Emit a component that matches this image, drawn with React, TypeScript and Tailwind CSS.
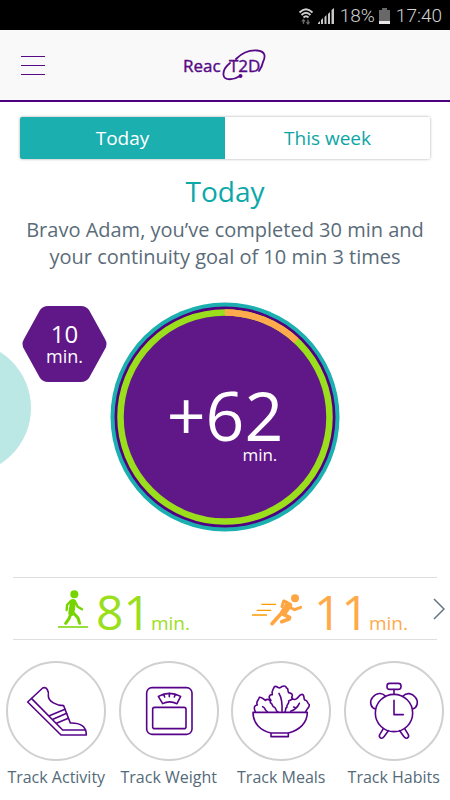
import { useState, type ReactNode } from "react";

const ARC = 2 * Math.PI * 104.5;

function StatusBar() {
  return (
    <div className="flex h-[30px] items-center justify-end bg-black pt-0.5 pr-2 font-[Roboto,sans-serif] text-[19px] text-[#d0d0d0]">
      <svg className="mr-0.5 h-5 w-5" viewBox="0 0 20 20" fill="none" stroke="#d0d0d0" strokeWidth="1.8" aria-hidden="true">
        <path d="M3.500 6.500Q10 0 16.500 6.500M5.500 9Q10 4.500 14.500 9M7.500 11.500Q10 9 12.500 11.500" />
        <path d="M7.500 18V14M6 15.500 7.500 13.500 9 15.500M12 13.500V17.500M10.500 16 12 18 13.500 16" stroke="#666" strokeWidth="1.300" />
      </svg>
      <svg className="mr-1.5 h-4 w-4" viewBox="0 0 16 16" fill="#c8c8c8" aria-hidden="true">
        <path d="M0 16v-1l2-2v3zM3 16v-4l2-2v6zM6.500 16V9l2-2v9zM10 16V6l2-2v12zM13.500 16V2L16 0v16z" />
      </svg>
      <span className="font-light">18%</span>
      <svg className="mr-1.5 ml-1 h-4 w-[11px]" viewBox="0 0 11 16" aria-hidden="true">
        <path d="M0 2h3V0h5v2h3v14H0z" fill="#686868" />
        <path d="M0 13h11v3H0z" fill="#e8e8e8" />
      </svg>
      <span className="font-light">17:40</span>
    </div>
  );
}

function Logo() {
  return (
    <svg className="h-10 w-[90px]" viewBox="0 0 90 40" role="img" aria-label="ReacT2D">
      <g fill="#560a86" stroke="#560a86" strokeWidth="0.4" fontFamily="'Open Sans', sans-serif" fontSize="18">
        <text x="3" y="27" fontSize="17">Reac</text>
        <text x="49" y="27" fontSize="17">T2D</text>
      </g>
      <path d="M56 14C62 8 70 5 77 5.500C85 6 86 11 83 17Q82 22 79 26M50 18C45 22 43 26 43.500 30C44 36 54 35 60 31" fill="none" stroke="#560a86" strokeWidth="1.8" strokeLinecap="round" />
      <circle cx="60.500" cy="31" r="2" fill="#560a86" />
    </svg>
  );
}

function Header() {
  return (
    <header className="grid h-[72px] grid-cols-[1fr_auto_1fr] items-center border-b-2 border-[#4d007f] bg-[#f9f9f9]">
      <button aria-label="Menu" className="ml-[21px] flex w-6 flex-col gap-2">
        <span className="h-px bg-[#560a86]" />
        <span className="h-px bg-[#560a86]" />
        <span className="h-px bg-[#560a86]" />
      </button>
      <Logo />
    </header>
  );
}

function Tabs() {
  const [active, setActive] = useState("Today");
  return (
    <div className="mx-5 mt-[15px] grid h-[42px] grid-cols-2 overflow-hidden rounded-xs shadow-[0_0_3px_#a8a8a8]">
      {["Today", "This week"].map((t) => (
        <button
          key={t}
          onClick={() => setActive(t)}
          className={t === active ? "bg-[#1bafb0] text-[19px] text-white" : "bg-white text-[19px] text-[#0ba5a5]"}
        >
          {t}
        </button>
      ))}
    </div>
  );
}

function Dial() {
  return (
    <div className="grid aspect-square w-[230px] place-items-center">
      <svg className="col-start-1 row-start-1 h-full w-full" viewBox="0 0 230 230" aria-hidden="true">
        <circle cx="115" cy="115" r="114.500" fill="#1bafb0" />
        <circle cx="115" cy="115" r="110.500" fill="#520082" />
        <circle cx="115" cy="115" r="102" fill="#601787" />
        <g fill="none" strokeWidth="6.500" transform="rotate(-90 115 115)">
          <circle cx="115" cy="115" r="104.500" stroke="#9ade1c" />
          <circle cx="115" cy="115" r="104.500" stroke="#ffaa4d" strokeDasharray={`${(ARC * 11) / 92} ${ARC}`} />
        </g>
      </svg>
      <div className="z-10 col-start-1 row-start-1 flex flex-col items-end pt-3 text-white">
        <span className="text-[68px] leading-[64px]">+62</span>
        <span className="pr-1.5 text-[17px] leading-4">min.</span>
      </div>
    </div>
  );
}

function Hexagon() {
  return (
    <div className="mt-1 mr-[3px] grid h-[76px] w-[85px] place-items-center justify-self-end">
      <svg className="col-start-1 row-start-1 h-full w-full" viewBox="0 0 85 76" aria-hidden="true">
        <path d="M26 0H59Q64 0 67 4L83 33Q86 38 83 43L67 72Q64 76 59 76H26Q21 76 18 72L2 43Q-1 38 2 33L18 4Q21 0 26 0Z" fill="#601787" />
      </svg>
      <div className="z-10 col-start-1 row-start-1 flex flex-col items-center text-white">
        <span className="text-2xl leading-6">10</span>
        <span className="text-lg leading-5">min.</span>
      </div>
    </div>
  );
}

function Stats() {
  return (
    <section className="mx-[13px] mt-[45px] grid h-[63px] grid-cols-[1fr_1fr_auto] items-center border-y border-[#dedede]">
      <div className="flex items-baseline justify-center pt-1.5 pl-3 text-[#9ade1c]">
        <svg className="mr-2 mb-1.5 h-10 w-[30px] self-center" viewBox="0 -2 90 114" aria-hidden="true">
          <g fill="none" stroke="#76d400" strokeLinecap="round" strokeLinejoin="round">
            <path d="M0 109H90" strokeWidth="5" />
            <path d="M45 34 40 67" strokeWidth="18" />
            <path d="M39 30 27 43 26 58M52 34 59 48 72 56" strokeWidth="7" />
            <path d="M39 68 33 84 23 98M47 68 60 82 65 98" strokeWidth="9" />
          </g>
          <circle cx="49" cy="11" r="12" fill="#76d400" />
        </svg>
        <span className="text-5xl leading-[54px]">81</span>
        <span className="text-[19px] leading-6">min.</span>
      </div>
      <div className="flex items-baseline justify-center pt-1.5 pl-1 text-[#ffaa4a]">
        <svg className="mr-3 h-9 w-[50px] self-center" viewBox="0 0 150 108" aria-hidden="true">
          <g fill="none" stroke="#ffa642" strokeLinecap="round" strokeLinejoin="round">
            <path d="M28 31H72M14 49H58M0 63H45" strokeWidth="4" strokeLinecap="butt" stroke="#ff9c00" />
            <path d="M105 31 87 59 60 89" strokeWidth="11" />
            <path d="M111 34 96 54" strokeWidth="19" />
            <path d="M106 25 95 21 90 38M117 42 128 47 146 40" strokeWidth="9" />
            <path d="M94 61 113 70 111 75 89 83" strokeWidth="11" />
          </g>
          <circle cx="129" cy="13" r="12" fill="#ffa642" />
        </svg>
        <span className="text-5xl leading-[54px]">11</span>
        <span className="text-[19px] leading-6">min.</span>
      </div>
      <button aria-label="Show details" className="-mr-2">
        <svg className="h-6 w-3" viewBox="0 0 12 24" fill="none" stroke="#617585" strokeWidth="1.500" aria-hidden="true">
          <path d="M1 2 11 12 1 22" />
        </svg>
      </button>
    </section>
  );
}

function Track({ label, children }: { label: string; children: ReactNode }) {
  return (
    <button className="flex flex-col items-center">
      <span className="block rounded-full border-2 border-[#d0d0d0]">
        <svg className="h-24 w-24" viewBox="24 24 288 288" fill="none" stroke="#56038a" strokeWidth="4.800" strokeLinejoin="round" strokeLinecap="round" aria-hidden="true">
          {children}
        </svg>
      </span>
      <span className="mt-1 text-base whitespace-nowrap text-[#546a78]">{label}</span>
    </button>
  );
}

export default function App() {
  return (
    <div className="relative overflow-hidden bg-white font-['Open_Sans',sans-serif]">
      <StatusBar />
      <Header />
      <main>
        <Tabs />
        <h1 className="mt-3 text-center text-[28px] leading-10 text-[#0ba8a8]">Today</h1>
        <p className="mx-auto mt-[5px] max-w-[410px] text-center text-xl leading-[27px] text-[#5a6c79]">
          Bravo Adam, you’ve completed 30 min and your continuity goal of 10 min 3 times
        </p>
        <div className="absolute top-[342px] -left-[101px] h-33 w-33 rounded-full bg-[#bbe7e5]" />
        <section className="mt-8 grid grid-cols-[1fr_230px_1fr]">
          <Hexagon />
          <Dial />
        </section>
        <Stats />
        <nav aria-label="Track" className="mt-[21px] grid grid-cols-4">
          <Track label="Track Activity">
            <path d="M83 141 183 240H259C259 212 238 203 211 204L191 152C170 152 145 140 145 122C147 108 140 94 128 99Z" />
            <path d="M95 131 188 225H257M148 182 195 163M159 193 200 175M171 204 205 190" />
          </Track>
          <Track label="Track Weight">
            <rect x="101" y="98" width="136" height="140" rx="16" />
            <rect x="119" y="157" width="100" height="64" rx="6" />
            <path d="M136 124Q169 106 203 124L192 146Q169 135 149 146ZM152 118 155 126M169 115V125M187 118 184 126" />
          </Track>
          <Track label="Track Meals">
            <path d="M84 172H247C247 204 223 226 190 234V245H138V234C105 226 84 204 84 172ZM138 234H190" />
            <path d="M91 170C85 158 89 150 97 150C91 139 102 135 103 127C111 125 115 133 121 136C128 129 138 136 136 143C145 146 139 154 148 157C155 160 150 167 159 171" />
            <path d="M138 136C127 126 135 118 142 119C138 108 145 104 148 95C156 91 160 102 166 98C172 92 183 90 184 99C190 98 188 110 191 113C201 114 205 120 200 127C206 130 200 135 191 138C194 147 183 149 186 156C178 162 184 166 180 170M162 115C171 130 172 150 171 169" />
            <path d="M201 132C206 132 209 136 213 132C221 130 221 118 231 118C239 118 235 129 239 135C249 134 245 144 253 149C254 157 247 160 242 170M197 169C210 164 219 154 223 145M206 156 211 158M113 155C122 158 117 164 127 170" />
          </Track>
          <Track label="Track Habits">
            <circle cx="168" cy="174" r="56" />
            <rect x="147" y="85" width="42" height="18" rx="8" />
            <path d="M168 104V116M168 136V179H196" />
            <path d="M112 162C98 158 93 140 104 127C115 113 132 112 142 123M195 123C206 112 222 114 232 127C243 140 238 158 224 162" />
            <path d="M136 221 125 239C121 248 132 254 138 245L151 227M200 221 211 239C215 248 204 254 198 245L185 227" />
          </Track>
        </nav>
      </main>
    </div>
  );
}
